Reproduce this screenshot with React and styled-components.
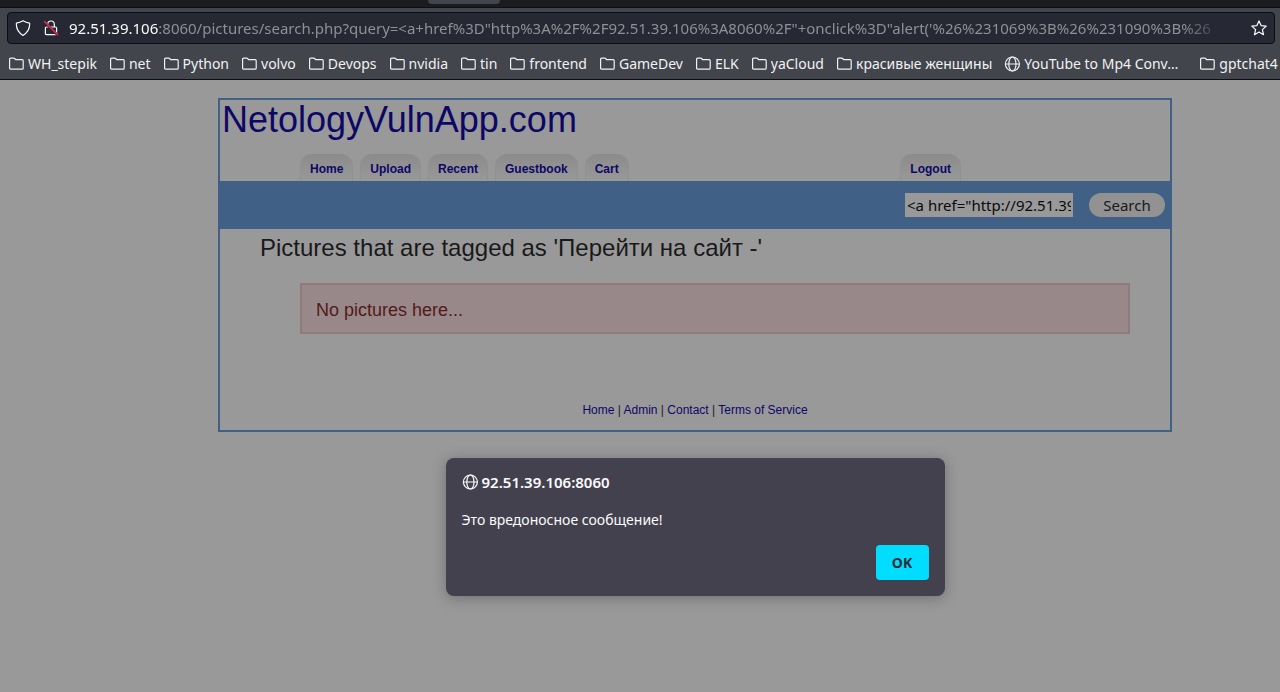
import React from "react";
import styled, { createGlobalStyle } from "styled-components";

const GlobalStyle = createGlobalStyle`
  *, *::before, *::after { box-sizing: border-box; }
  body { margin: 0; background: #99999a; overflow: hidden; }
  button, input { font: inherit; margin: 0; }
  a { text-decoration: none; }
`;

const uiFont = `"Noto Sans", sans-serif`;
const siteFont = `"Liberation Sans", Arial, sans-serif`;

const Browser = styled.div`
  display: flex;
  flex-direction: column;
  min-height: 100vh;
`;

const Chrome = styled.header`
  background: #42454b;
  border-bottom: 1px solid #0d0f14;
  font-family: ${uiFont};
  font-size: 14px;
  line-height: 20px;
`;

const TabStrip = styled.div`
  height: 8px;
  background: #1b1c20;
  border-bottom: 1px solid #0d0f14;
  display: flex;
`;

const ActiveTab = styled.div`
  width: 72px;
  height: 4px;
  margin-left: 428px;
  background: #42454b;
  border-radius: 0 0 4px 4px;
`;

const AddressBar = styled.div`
  display: flex;
  align-items: center;
  height: 32px;
  margin: 4px 5px 0 7px;
  padding: 0 7px;
  background: #262833;
  border: 1px solid #0b0c14;
  border-radius: 4px;
  color: #fbfbfe;
`;

const IconButton = styled.button`
  display: flex;
  flex: none;
  padding: 0;
  border: 0;
  background: none;
  color: inherit;
  margin-right: ${(p) => p.$gap || 0}px;
`;

const UrlField = styled.div`
  display: flex;
  flex: 1;
  min-width: 0;
`;

const Url = styled.div`
  max-width: 100%;
  overflow: hidden;
  white-space: nowrap;
  font-size: 15px;
  color: #8e8f97;
  mask-image: linear-gradient(to left, rgba(0, 0, 0, 0.3), #000 28px);
`;

const UrlHost = styled.span`
  color: #fbfbfe;
`;

const Bookmarks = styled.nav`
  display: flex;
  gap: 12px;
  height: 35px;
  padding: 10px 0 0 8px;
  overflow: hidden;
`;

const Bookmark = styled.a`
  display: flex;
  flex: none;
  align-items: center;
  gap: 4px;
  height: 20px;
  color: #f1f1f4;
  white-space: nowrap;
`;

const BookmarkName = styled.span`
  width: ${(p) => (p.$long ? "163px" : "auto")};
  overflow: hidden;
  text-overflow: ellipsis;
`;

const Viewport = styled.main`
  position: relative;
  flex: 1;
  padding: 18px 108px 0 218px;
  font-family: ${siteFont};
`;

const Site = styled.div`
  border: 2px solid #416085;
  color: #19191a;
`;

const SiteTitle = styled.h1`
  margin: 0;
  padding: 0 2px;
  font-size: 36px;
  font-weight: 400;
  line-height: 40px;
  a { color: #0d0766; }
`;

const Tabs = styled.nav`
  display: flex;
  gap: 7px;
  margin-top: 14px;
  padding: 0 209px 0 80px;
`;

const Tab = styled.a`
  height: 27px;
  padding: 8px 10px 0;
  margin-left: ${(p) => (p.$end ? "auto" : 0)};
  border-radius: 12px 12px 0 0;
  background: linear-gradient(#8b8b8c, #99999a);
  box-shadow: inset 1px 0 #919192, inset -1px 0 #919192;
  color: #0d0766;
  font-size: 12px;
  font-weight: 700;
  line-height: 14px;
`;

const SearchBar = styled.form`
  display: flex;
  justify-content: flex-end;
  gap: 16px;
  padding: 12px 5px;
  background: #416085;
  font-family: ${uiFont};
  font-size: 15px;
`;

const SearchInput = styled.input`
  width: 168px;
  height: 24px;
  padding: 0 2px;
  border: 0;
  border-radius: 0;
  background: #99999a;
  color: #0a0a0a;
`;

const SearchButton = styled.button`
  width: 76px;
  height: 24px;
  padding: 0;
  border: 0;
  border-radius: 12px;
  background: #929293;
  color: #19191a;
  line-height: 22px;
`;

const Heading = styled.h2`
  margin: 4px 40px 0;
  font-size: 24px;
  font-weight: 400;
  line-height: 30px;
`;

const Notice = styled.p`
  margin: 20px 40px 0 80px;
  padding: 15px 14px 12px;
  border: 2px solid #8f7a7e;
  background: #99888a;
  color: #531a18;
  font-size: 18px;
  line-height: 20px;
`;

const Footer = styled.footer`
  padding: 68px 0 12px;
  text-align: center;
  font-size: 12px;
  line-height: 16px;
  a { color: #0d0766; }
`;

const Dialog = styled.div`
  position: absolute;
  top: 378px;
  left: 110px;
  right: 0;
  width: 499px;
  margin: 0 auto;
  padding: 14px 16px 16px;
  border-radius: 8px;
  background: #42414d;
  box-shadow: 0 2px 14px rgba(20, 20, 25, 0.3);
  color: #fbfbfe;
  font-family: ${uiFont};
  font-size: 14px;
  line-height: 20px;
`;

const DialogTitle = styled.div`
  display: flex;
  align-items: center;
  gap: 4px;
  font-size: 15px;
  font-weight: 600;
`;

const DialogText = styled.p`
  margin: 18px 0 15px;
`;

const DialogActions = styled.div`
  display: flex;
  justify-content: flex-end;
`;

const OkButton = styled.button`
  width: 53px;
  height: 35px;
  padding: 0;
  border: 0;
  border-radius: 4px;
  background: #00ddff;
  color: #2b2a33;
  font-weight: 700;
`;

const Icon = ({ size = 16, children }) => (
  <svg width={size} height={size} viewBox="0 0 16 16" fill="none" stroke="currentColor" strokeWidth="1.2" strokeLinejoin="round" strokeLinecap="round" aria-hidden="true">
    {children}
  </svg>
);

const FolderIcon = () => (
  <Icon>
    <path d="M1.6 12.2V3.1Q1.6 2.1 2.6 2.1H5.6Q6.2 2.1 6.6 2.5L7.6 3.7H14.2Q15.2 3.7 15.2 4.7V12.2Q15.2 13.2 14.2 13.2H2.6Q1.6 13.2 1.6 12.2Z" />
  </Icon>
);

const GlobeIcon = () => (
  <Icon>
    <circle cx="8.4" cy="8" r="7" />
    <ellipse cx="8.4" cy="8" rx="3.6" ry="7" />
    <path d="M1.4 8H15.4" />
  </Icon>
);

const ShieldIcon = () => (
  <Icon>
    <path d="M8 .7Q11 2.5 14.6 3.1Q15.2 11 8 15.4Q.8 11 1.4 3.1Q5 2.5 8 .7Z" />
  </Icon>
);

const InsecureIcon = () => (
  <Icon>
    <path d="M4.7 7V4.3A3.3 3.3 0 0 1 11.3 4.3V7M3.4 7H12.6Q13.6 7 13.6 8V13.6Q13.6 14.6 12.6 14.6H3.4Q2.4 14.6 2.4 13.6V8Q2.4 7 3.4 7Z" />
    <path d="M2 2.6L14.6 15.2" stroke="#262833" strokeWidth="2.4" />
    <path d="M1.6 1.6L14.6 14.6" stroke="#e22850" strokeWidth="1.5" />
  </Icon>
);

const StarIcon = () => (
  <Icon>
    <path d="M8 .9L10.1 5.6L15.2 6.1L11.4 9.6L12.5 14.7L8 12.1L3.5 14.7L4.6 9.6L.8 6.1L5.9 5.6Z" />
  </Icon>
);

const bookmarks = [
  "WH_stepik", "net", "Python", "volvo", "Devops", "nvidia", "tin", "frontend",
  "GameDev", "ELK", "yaCloud", "красивые женщины",
  { name: "YouTube to Mp4 Conv…", page: true },
  "gptchat4",
].map((b) => (typeof b === "string" ? { name: b } : b));

const footerLinks = ["Home", "Admin", "Contact", "Terms of Service"];

export default function App() {
  return (
    <Browser>
      <GlobalStyle />
      <Chrome>
        <TabStrip><ActiveTab /></TabStrip>
        <AddressBar>
          <IconButton $gap={12} aria-label="Tracking protection"><ShieldIcon /></IconButton>
          <IconButton $gap={10} aria-label="Connection not secure"><InsecureIcon /></IconButton>
          <UrlField>
            <Url>
              <UrlHost>92.51.39.106</UrlHost>
              {`:8060/pictures/search.php?query=<a+href%3D"http%3A%2F%2F92.51.39.106%3A8060%2F"+onclick%3D"alert('%26%231069%3B%26%231090%3B%26`}
            </Url>
          </UrlField>
          <IconButton aria-label="Bookmark this page"><StarIcon /></IconButton>
        </AddressBar>
        <Bookmarks>
          {bookmarks.map((b) => (
            <Bookmark href="#" key={b.name}>
              {b.page ? <GlobeIcon /> : <FolderIcon />}
              <BookmarkName $long={b.page}>{b.name}</BookmarkName>
            </Bookmark>
          ))}
        </Bookmarks>
      </Chrome>
      <Viewport>
        <Site>
          <SiteTitle><a href="#">NetologyVulnApp.com</a></SiteTitle>
          <Tabs>
            {["Home", "Upload", "Recent", "Guestbook", "Cart"].map((t) => (
              <Tab href="#" key={t}>{t}</Tab>
            ))}
            <Tab href="#" $end>Logout</Tab>
          </Tabs>
          <SearchBar onSubmit={(e) => e.preventDefault()}>
            <SearchInput aria-label="Search pictures" defaultValue={'<a href="http://92.51.39.106:8060/"'} />
            <SearchButton>Search</SearchButton>
          </SearchBar>
          <Heading>Pictures that are tagged as 'Перейти на сайт -'</Heading>
          <Notice>No pictures here...</Notice>
          <Footer>
            {footerLinks.map((l, i) => (
              <React.Fragment key={l}>
                {i > 0 && " | "}
                <a href="#">{l}</a>
              </React.Fragment>
            ))}
          </Footer>
        </Site>
        <Dialog role="alertdialog" aria-labelledby="dialog-title" aria-describedby="dialog-text">
          <DialogTitle id="dialog-title"><GlobeIcon />92.51.39.106:8060</DialogTitle>
          <DialogText id="dialog-text">Это вредоносное сообщение!</DialogText>
          <DialogActions><OkButton>OK</OkButton></DialogActions>
        </Dialog>
      </Viewport>
    </Browser>
  );
}
